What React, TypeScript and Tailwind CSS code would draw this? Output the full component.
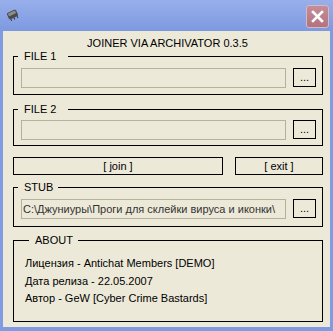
import React from 'react';

const FONT = { fontFamily: '"Liberation Sans", Arial, sans-serif' };

function Browse() {
  return (
    <button className="ml-[7px] h-[19px] w-[23px] shrink-0 border border-black bg-[#ece9d8] text-[11px] leading-[13px] text-black">
      ...
    </button>
  );
}

function Group({ title, className, children }: { title: string; className?: string; children: React.ReactNode }) {
  return (
    <fieldset className={`w-[310px] border border-black ${className ?? ''}`}>
      <legend className="ml-[4px] pl-[6px] pr-[5px] text-[11px] leading-[13px] text-black whitespace-pre">{title}</legend>
      {children}
    </fieldset>
  );
}

function FileRow({ value }: { value?: string }) {
  return (
    <div className="flex items-start pl-[7px]">
      <div className="h-[20px] w-[265px] shrink-0 overflow-hidden whitespace-nowrap border border-[#b5b19f] bg-[#ece9d8] pl-[1px] text-[11px] leading-[18px] text-[#333]">
        {value}
      </div>
      <Browse />
    </div>
  );
}

export default function App() {
  return (
    <div className="h-[331px] w-[333px] bg-[#7f9be2] select-none" style={FONT}>
      {/* Title bar */}
      <div className="flex h-[31px] items-start justify-between bg-gradient-to-b from-[#98afeb] to-[#7d99e0] pl-[6px] pr-[4px]">
        <svg width="13" height="13" viewBox="0 0 13 13" className="mt-[8px]">
          <g transform="rotate(-25 6.5 6.5)">
            <rect x="1.5" y="3" width="10" height="7" rx="1.5" fill="#4a4a4a" />
            <rect x="2.5" y="3.8" width="8" height="3" rx="1" fill="#8c8c8c" />
            <line x1="3" y1="10" x2="3" y2="12" stroke="#333" />
            <line x1="6.5" y1="10" x2="6.5" y2="12" stroke="#333" />
            <line x1="10" y1="10" x2="10" y2="12" stroke="#333" />
          </g>
        </svg>
        <div className="mt-[5px] flex h-[23px] w-[23px] items-center justify-center rounded-[3px] border border-[#d9b8c0] bg-gradient-to-b from-[#c48e99] to-[#b3727f]">
          <svg width="13" height="13" viewBox="0 0 13 13">
            <path d="M2 2 L11 11 M11 2 L2 11" stroke="#fff" strokeWidth="2.6" strokeLinecap="square" />
          </svg>
        </div>
      </div>

      {/* Client */}
      <div className="mx-[3px] flex h-[296px] flex-col bg-[#ece9d8] pl-[10px] pr-[8px]">
        <div className="h-[19px] pt-[6px] text-center text-[11px] leading-[13px] text-black">
          JOINER VIA ARCHIVATOR 0.3.5
        </div>

        <Group title="FILE 1  " className="pt-[5px] pb-[6px]">
          <FileRow />
        </Group>

        <Group title="FILE 2  " className="mt-[8px] pt-[4px] pb-[5px]">
          <FileRow />
        </Group>

        <div className="mt-[11px] flex w-[310px] gap-[12px]">
          <button className="h-[18px] w-[210px] border border-black bg-[#ece9d8] text-[11px] leading-[16px] text-black">
            [ join ]
          </button>
          <button className="h-[18px] w-[88px] border border-black bg-[#ece9d8] text-[11px] leading-[16px] text-black">
            [ exit ]
          </button>
        </div>

        <Group title="STUB" className="mt-[6px] pt-[5px] pb-[7px]">
          <FileRow value="C:\Джуниуры\Проги для склейки вируса и иконки\" />
        </Group>

        <Group title="ABOUT" className="mt-[7px] pt-[8px] pb-[13px] pl-[11px]">
          <div className="text-[11px] leading-[17.5px] text-black">
            <div>Лицензия - Antichat Members [DEMO]</div>
            <div>Дата релиза - 22.05.2007</div>
            <div>Автор - GeW [Cyber Crime Bastards]</div>
          </div>
        </Group>
      </div>
    </div>
  );
}
